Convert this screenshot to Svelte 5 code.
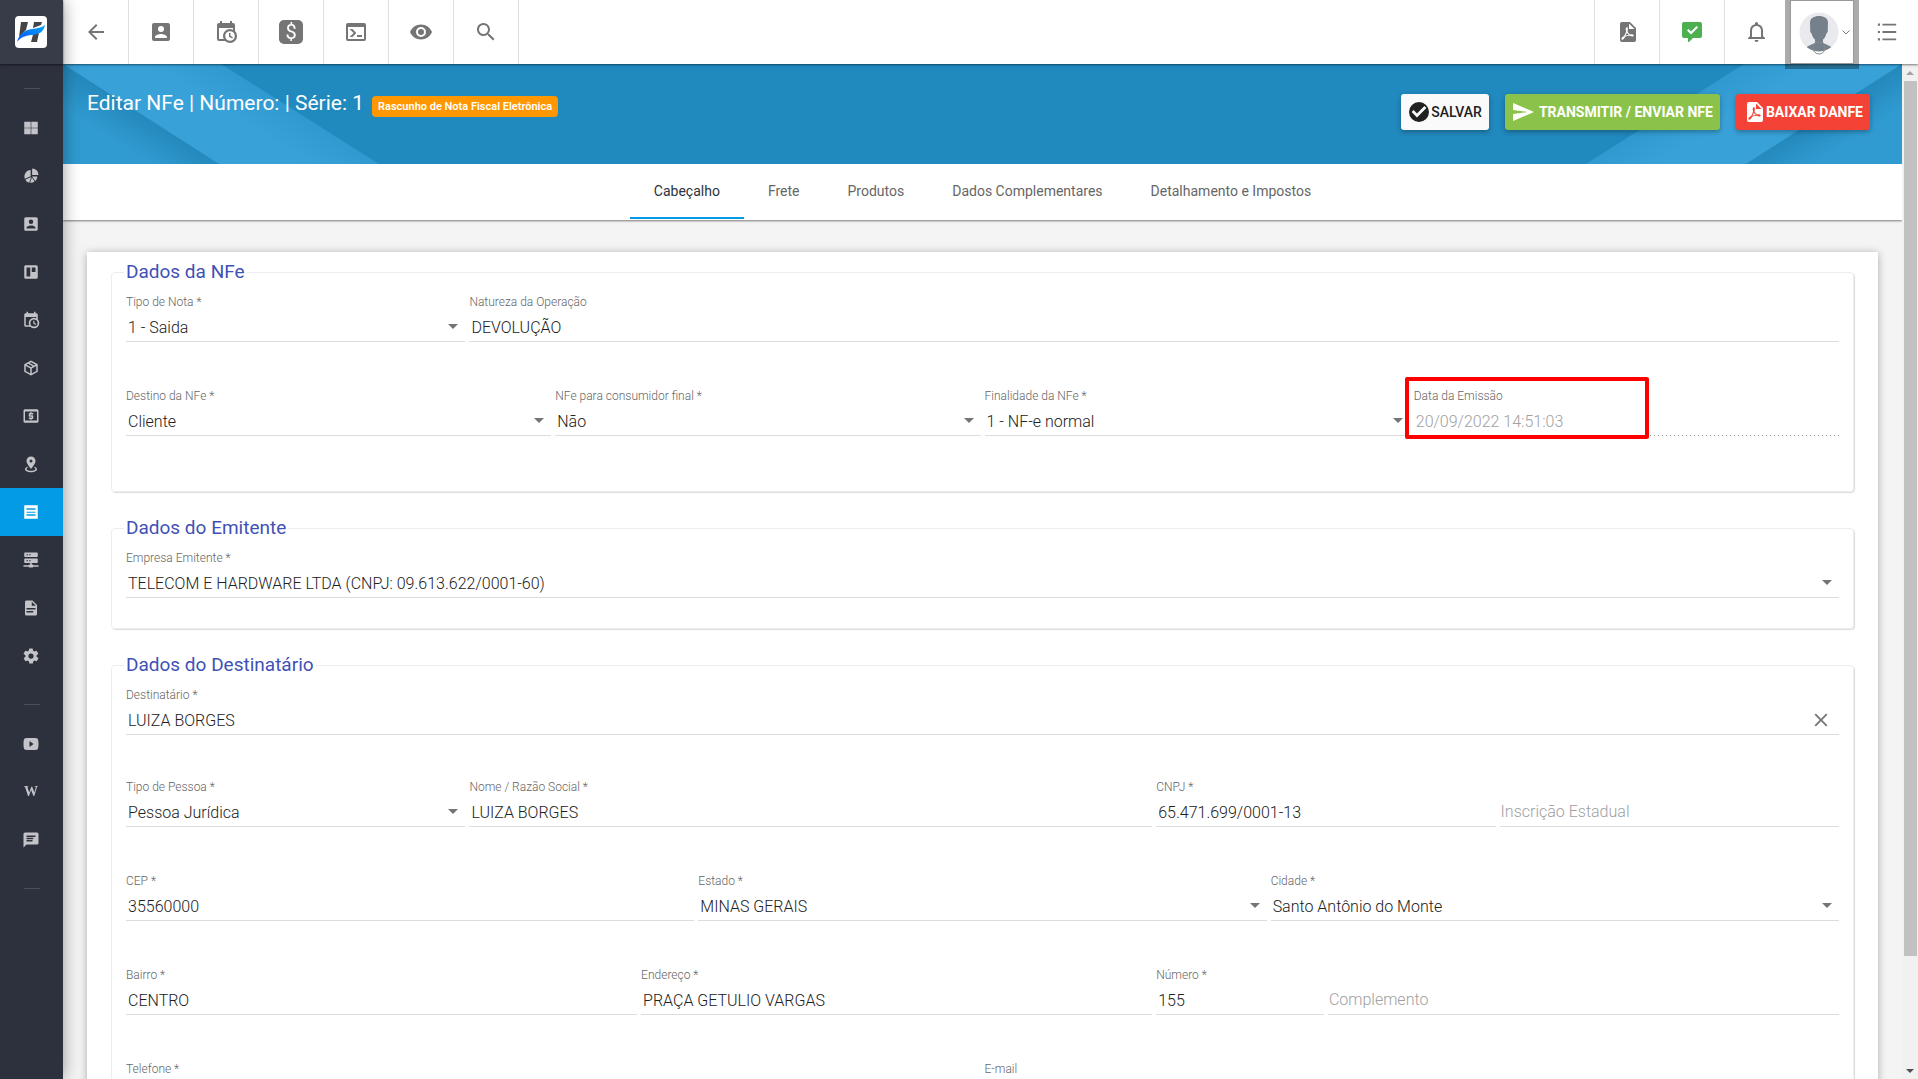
<script>
	const icons = {
		back: 'M20 11H7.8l5.6-5.6L12 4l-8 8 8 8 1.4-1.4L7.8 13H20z',
		accountBox: 'M6 17c0-2 4-3.1 6-3.1s6 1.1 6 3.1v1H6M15 9a3 3 0 1 1-6 0 3 3 0 0 1 6 0M3 5v14a2 2 0 0 0 2 2h14a2 2 0 0 0 2-2V5a2 2 0 0 0-2-2H5a2 2 0 0 0-2 2z',
		calendarClock: 'M15 13h1.5v2.8l2.4 1.4-.7 1.3-3.2-1.8V13M19 8H5v11h4.7A7 7 0 0 1 19 9.7V8M5 21a2 2 0 0 1-2-2V5c0-1.1.9-2 2-2h1V1h2v2h8V1h2v2h1a2 2 0 0 1 2 2v6.1A7 7 0 1 1 11.1 21H5m11-9.8a4.8 4.8 0 1 0 0 9.6 4.8 4.8 0 0 0 0-9.6z',
		console: 'M20 19V7H4v12h16m0-16a2 2 0 0 1 2 2v14a2 2 0 0 1-2 2H4a2 2 0 0 1-2-2V5c0-1.1.9-2 2-2h16m-7 14v-2h5v2h-5m-3.4-4-4-4h2.8l3.3 3.3c.4.4.4 1 0 1.4L8.4 17H5.6z',
		eye: 'M12 9a3 3 0 1 0 0 6 3 3 0 0 0 0-6m0 8a5 5 0 1 1 0-10 5 5 0 0 1 0 10m0-12.5C7 4.5 2.7 7.6 1 12c1.7 4.4 6 7.5 11 7.5s9.3-3.1 11-7.5c-1.7-4.4-6-7.5-11-7.5z',
		search: 'M15.5 14h-.8l-.3-.3A6.5 6.5 0 1 0 13.7 14.4l.3.3v.8l5 5 1.5-1.5-5-5zm-6 0a4.500 4.500 0 1 1 0-9 4.500 4.500 0 0 1 0 9z',
		pdf: 'M14 9h5.500L14 3.500V9M7 2h8l6 6v12a2 2 0 0 1-2 2H7a2 2 0 0 1-2-2V4a2 2 0 0 1 2-2M11.930 12.440C12.340 13.340 12.860 14.080 13.460 14.590L13.870 14.910C13 15.070 11.800 15.350 10.530 15.840L10.420 15.880L10.920 14.840C11.370 13.970 11.700 13.180 11.930 12.440M18.410 16.250C18.590 16.070 18.680 15.840 18.690 15.590C18.720 15.390 18.670 15.200 18.570 15.040C18.280 14.570 17.530 14.350 16.290 14.350L15 14.420L14.130 13.840C13.500 13.320 12.930 12.410 12.530 11.280L12.570 11.140C12.900 9.810 13.210 8.200 12.550 7.540C12.390 7.380 12.170 7.300 11.940 7.300H11.700C11.330 7.300 11 7.690 10.910 8.070C10.540 9.400 10.760 10.130 11.130 11.340C10.880 12.230 10.560 13.250 10.050 14.280L9.090 16.080L8.200 16.570C7 17.320 6.430 18.160 6.320 18.690C6.280 18.880 6.300 19.050 6.370 19.230L6.400 19.280L6.880 19.590L7.320 19.700C8.130 19.700 9.050 18.750 10.290 16.630L10.470 16.560C11.500 16.230 12.780 16 14.500 15.810C15.530 16.320 16.740 16.550 17.500 16.550C17.940 16.550 18.240 16.440 18.410 16.250Z',
		messageCheck: 'M4 2h16a2 2 0 0 1 2 2v12a2 2 0 0 1-2 2h-7l-4 4H8v-4H4a2 2 0 0 1-2-2V4c0-1.100.9-2 2-2M16.600 6 11 11.600 8.400 9 7 10.400l4 4 7-7z',
		bell: 'M16 17H7v-6.500a4.500 4.500 0 0 1 9 0M18 16v-5.500a6.500 6.500 0 0 0-5-6.300v-.7a1.500 1.500 0 0 0-3 0v.7a6.500 6.500 0 0 0-5 6.300V16l-2 2v1h17v-1M11.500 22a2 2 0 0 0 2-2h-4a2 2 0 0 0 2 2z',
		list: 'M7 3h15v2H7V3m0 8h15v2H7v-2m0 8h15v2H7v-2M2 2.800h2.400v2.400H2V2.800m0 8h2.400v2.400H2v-2.400m0 8h2.400v2.400H2v-2.400z',
		checkCircle: 'M12 2a10 10 0 1 0 0 20 10 10 0 0 0 0-20M10 17.400 4.600 12 6.600 10 10 13.400 17.400 6l2 2z',
		send: 'M2 21 23 12 2 3v7l15 2-15 2z',
		close: 'M19 6.400 17.600 5 12 10.600 6.400 5 5 6.400l5.600 5.600L5 17.600 6.400 19l5.600-5.600 5.600 5.600 1.400-1.400-5.600-5.600z',
		grid: 'M3 3.500h8.600v8H3v-8m9.400 0H21v8h-8.600v-8M3 12.300h8.600v8H3v-8m9.400 0H21v8h-8.600v-8z',
		pie: 'M13.500 2A8.500 8.500 0 0 1 22 10.500h-8.500V2M11.500 4v8.200l-7.600 3.600A8.500 8.500 0 0 1 11.500 4M12.300 13.200l-2.700 7.700a8.500 8.500 0 0 1-5.200-4zM13.400 12.500h7a8.500 8.500 0 0 1-2.700 6.200zM13.200 14l3.500 5.400a8.500 8.500 0 0 1-6 1.600z',
		board: 'M5 3h14a2 2 0 0 1 2 2v14a2 2 0 0 1-2 2H5a2 2 0 0 1-2-2V5c0-1.100.9-2 2-2m1 3v12h5V6H6m7 0v6h5V6h-5z',
		cube: 'M21 16.500c0 .4-.2.700-.5.900l-7.900 4.400a1 1 0 0 1-1.200 0l-7.900-4.400a1 1 0 0 1-.5-.9v-9c0-.4.200-.7.500-.9l7.900-4.400a1 1 0 0 1 1.200 0l7.900 4.400c.3.200.5.500.5.900v9M12 4.200 10.100 5.200 16 8.600l2-1.100-6-3.300M6 7.500l6 3.400 2-1.200-5.900-3.400L6 7.500M5 15.900l6 3.400v-6.700L5 9.200v6.700m14 0V9.200l-6 3.400v6.700l6-3.400z',
		cash: 'M4 3h16a2 2 0 0 1 2 2v14a2 2 0 0 1-2 2H4a2 2 0 0 1-2-2V5c0-1.100.9-2 2-2m0 3v12h16V6H4m7 11h2v-1h1a1 1 0 0 0 1-1v-3a1 1 0 0 0-1-1h-3v-1h4V8h-2V7h-2v1h-1a1 1 0 0 0-1 1v3a1 1 0 0 0 1 1h3v1H9v2h2v1z',
		pin: 'M12 2a6 6 0 0 1 6 6c0 4-6 10.500-6 10.500S6 12 6 8a6 6 0 0 1 6-6m0 4a2 2 0 1 0 0 4 2 2 0 0 0 0-4m8 13c0 2.200-3.600 4-8 4s-8-1.800-8-4c0-1.300 1.200-2.400 3.100-3.200l.7.900C6.700 17.300 6 17.900 6 18.600 6 20 8.700 21 12 21s6-1 6-2.400c0-.7-.7-1.300-1.800-1.900l.7-.9C18.800 16.600 20 17.700 20 19z',
		note: 'M3 3h18v18H3V3m3 4v2h12V7H6m0 4.500v1.500h12v-1.500H6M6 15v2h12v-2H6z',
		server: 'M4 2h16a1 1 0 0 1 1 1v4a1 1 0 0 1-1 1H4a1 1 0 0 1-1-1V3a1 1 0 0 1 1-1m0 8h16a1 1 0 0 1 1 1v4a1 1 0 0 1-1 1h-7v2h1a1 1 0 0 1 1 1h7v2h-7a1 1 0 0 1-1 1h-4a1 1 0 0 1-1-1H2v-2h7a1 1 0 0 1 1-1h1v-2H4a1 1 0 0 1-1-1v-4a1 1 0 0 1 1-1m2-5.800v1.600h2V4.200H6m3.500 0v1.600h2V4.200h-2M6 12.200v1.600h2v-1.600H6m3.500 0v1.600h2v-1.600h-2z',
		file: 'M13 9h5.500L13 3.500V9M6 2h8l6 6v12a2 2 0 0 1-2 2H6a2 2 0 0 1-2-2V4c0-1.100.9-2 2-2m9 16v-2H6v2h9m3-4v-2H6v2h12z',
		cog: 'M12 15.500a3.500 3.500 0 1 1 0-7 3.500 3.500 0 0 1 0 7m7.400-2.500a7 7 0 0 0 0-2l2.100-1.600c.2-.2.200-.4.100-.7l-2-3.400c-.1-.2-.4-.3-.6-.2l-2.500 1a7 7 0 0 0-1.700-1l-.4-2.600a.5.5 0 0 0-.5-.5h-4a.5.5 0 0 0-.5.5l-.4 2.600a7 7 0 0 0-1.700 1l-2.500-1c-.2-.1-.5 0-.6.2l-2 3.400c-.1.300-.1.500.1.700L4.600 11a7 7 0 0 0 0 2l-2.100 1.600c-.2.200-.2.400-.1.700l2 3.400c.1.200.4.300.6.200l2.500-1a7 7 0 0 0 1.700 1l.4 2.600c0 .3.200.5.500.5h4c.3 0 .5-.2.500-.5l.4-2.600a7 7 0 0 0 1.700-1l2.500 1c.2.100.5 0 .6-.2l2-3.400c.1-.3.100-.5-.1-.7z',
		play: 'M10 16V8l5.500 4M20 4.400C19.500 4.200 15.700 4 12 4s-7.500.2-8 .4C2.400 4.900 2 8.400 2 12s.4 7.100 2 7.600c.5.200 4.300.4 8 .4s7.500-.2 8-.4c1.600-.5 2-4 2-7.600s-.4-7.100-2-7.600z',
		chat: 'M20 2H4a2 2 0 0 0-2 2v18l4-4h14a2 2 0 0 0 2-2V4a2 2 0 0 0-2-2M6 9h9v2H6V9m8 5H6v-2h8v2m4-6H6V6h12v2z'
	};

	const nav = [
		[
			{ icon: 'grid', title: 'Dashboard' },
			{ icon: 'pie', title: 'Relatórios' },
			{ icon: 'accountBox', title: 'Pessoas' },
			{ icon: 'board', title: 'Quadros' },
			{ icon: 'calendarClock', title: 'Agenda' },
			{ icon: 'cube', title: 'Produtos' },
			{ icon: 'cash', title: 'Financeiro' },
			{ icon: 'pin', title: 'Mapa' },
			{ icon: 'note', title: 'Notas fiscais', active: true },
			{ icon: 'server', title: 'Servidores' },
			{ icon: 'file', title: 'Documentos' },
			{ icon: 'cog', title: 'Configurações' }
		],
		[
			{ icon: 'play', title: 'Vídeos' },
			{ icon: 'wiki', title: 'Wiki' },
			{ icon: 'chat', title: 'Suporte' }
		]
	];

	const tools = [
		{ icon: 'back', title: 'Voltar' },
		{ icon: 'accountBox', title: 'Clientes' },
		{ icon: 'calendarClock', title: 'Agenda' },
		{ icon: 'money', title: 'Financeiro' },
		{ icon: 'console', title: 'Terminal' },
		{ icon: 'eye', title: 'Visualizar' },
		{ icon: 'search', title: 'Buscar' }
	];

	const tabs = ['Cabeçalho', 'Frete', 'Produtos', 'Dados Complementares', 'Detalhamento e Impostos'];
	let activeTab = $state('Cabeçalho');

	// w is the share of the row, in percent
	const sections = [
		{
			title: 'Dados da NFe',
			tall: true,
			rows: [
				[
					{ id: 'tipoNota', label: 'Tipo de Nota *', value: '1 - Saida', w: 20, select: true },
					{ id: 'natureza', label: 'Natureza da Operação', value: 'DEVOLUÇÃO', w: 80 }
				],
				[
					{ id: 'destino', label: 'Destino da NFe *', value: 'Cliente', w: 25, select: true },
					{ id: 'consumidor', label: 'NFe para consumidor final *', value: 'Não', w: 25, select: true },
					{ id: 'finalidade', label: 'Finalidade da NFe *', value: '1 - NF-e normal', w: 25, select: true },
					{ id: 'emissao', label: 'Data da Emissão', value: '20/09/2022 14:51:03', w: 25, disabled: true, marked: true }
				]
			]
		},
		{
			title: 'Dados do Emitente',
			rows: [
				[{ id: 'empresa', label: 'Empresa Emitente *', value: 'TELECOM E HARDWARE LTDA (CNPJ: 09.613.622/0001-60)', w: 100, select: true }]
			]
		},
		{
			title: 'Dados do Destinatário',
			rows: [
				[{ id: 'destinatario', label: 'Destinatário *', value: 'LUIZA BORGES', w: 100, clear: true }],
				[
					{ id: 'tipoPessoa', label: 'Tipo de Pessoa *', value: 'Pessoa Jurídica', w: 20, select: true },
					{ id: 'nome', label: 'Nome / Razão Social *', value: 'LUIZA BORGES', w: 40 },
					{ id: 'cnpj', label: 'CNPJ *', value: '65.471.699/0001-13', w: 20 },
					{ id: 'ie', label: 'Inscrição Estadual', w: 20 }
				],
				[
					{ id: 'cep', label: 'CEP *', value: '35560000', w: 33.333 },
					{ id: 'estado', label: 'Estado *', value: 'MINAS GERAIS', w: 33.333, select: true },
					{ id: 'cidade', label: 'Cidade *', value: 'Santo Antônio do Monte', w: 33.333, select: true }
				],
				[
					{ id: 'bairro', label: 'Bairro *', value: 'CENTRO', w: 30 },
					{ id: 'endereco', label: 'Endereço *', value: 'PRAÇA GETULIO VARGAS', w: 30 },
					{ id: 'numero', label: 'Número *', value: '155', w: 10 },
					{ id: 'complemento', label: 'Complemento', w: 30 }
				],
				[
					{ id: 'telefone', label: 'Telefone *', value: '', w: 50 },
					{ id: 'email', label: 'E-mail', value: '', w: 50 }
				]
			]
		}
	];

	let scroller = $state(null);
	let viewHeight = $state(0);
	let thumbSize = $state(100);
	let thumbTop = $state(0);

	function updateThumb() {
		if (!scroller) return;
		thumbSize = (scroller.clientHeight / scroller.scrollHeight) * 100;
		thumbTop = (scroller.scrollTop / scroller.scrollHeight) * 100;
	}

	$effect(() => {
		if (viewHeight) updateThumb();
	});
</script>

{#snippet glyph(name, size = 24)}
	{#if name === 'money'}
		<span class="money" aria-hidden="true">$</span>
	{:else if name === 'wiki'}
		<span class="wiki" aria-hidden="true">W</span>
	{:else}
		<svg width={size} height={size} viewBox="0 0 24 24" fill="currentColor" fill-rule="evenodd" aria-hidden="true">
			<path d={icons[name]} />
		</svg>
	{/if}
{/snippet}

<div class="app">
	<aside class="sidebar">
		<a class="logo" href="#inicio" aria-label="Início">
			<svg width="32" height="32" viewBox="0 0 32 32" aria-hidden="true">
				<defs>
					<linearGradient id="swoosh" x1="0" y1="1" x2="1" y2="0">
						<stop offset="0" stop-color="#0050ff" />
						<stop offset="1" stop-color="#0aa5f0" />
					</linearGradient>
				</defs>
				<rect width="32" height="32" rx="4" fill="#fff" />
				<path d="M6 6h7l-2 8-7 7zM19 6h8l-1 3-8 3zM19 15l6-3-3 14h-6z" fill="#444" />
				<path d="M2 26C4 18 10 14 17 13c6-1 9-1 13-4-1 6-5 9-12 10-7 0-12 2-16 7z" fill="url(#swoosh)" />
			</svg>
		</a>
		<nav>
			{#each nav as group}
				<hr />
				{#each group as item}
					<a class="nav-item" class:active={item.active} href="#{item.icon}" aria-label={item.title}>
						{@render glyph(item.icon, 18)}
					</a>
				{/each}
			{/each}
			<hr />
		</nav>
	</aside>

	<div class="shell">
		<header class="toolbar">
			{#each tools as tool}
				<button class="tool" aria-label={tool.title}>{@render glyph(tool.icon)}</button>
			{/each}
			<span class="spacer"></span>
			<button class="tool right" aria-label="Arquivos PDF">{@render glyph('pdf')}</button>
			<button class="tool right green" aria-label="Mensagens">{@render glyph('messageCheck')}</button>
			<button class="tool right" aria-label="Notificações">{@render glyph('bell')}</button>
			<button class="user" aria-label="Conta">
				<svg class="avatar" width="40" height="40" viewBox="0 0 40 40" aria-hidden="true">
					<defs>
						<clipPath id="face"><circle cx="20" cy="20" r="19.500" /></clipPath>
					</defs>
					<circle cx="20" cy="20" r="19.500" fill="#e8eaee" />
					<path
						clip-path="url(#face)"
						fill="#76808a"
						d="M11 11c0-5 4-7 9-7s9 2 9 7c0 2-.3 4-.2 6 .4 2-.4 4-1.600 5-.6 3-2 4.500-3.200 5.500v3c2 2 6.500 2.500 9.500 5.500-3 3-8.500 4-13.500 4s-10.500-1-13.500-4c3-3 7.500-3.500 9.500-5.500v-3c-1.200-1-2.600-2.500-3.200-5.500-1.200-1-2-3-1.600-5 .1-2-.2-4-.2-6z"
					/>
					<circle cx="20" cy="36" r="6" fill="none" stroke="#85898c" />
				</svg>
				<svg width="8" height="8" viewBox="0 0 8 8" fill="none" stroke="#777" aria-hidden="true"><path d="M.5 2.500 4 6l3.500-3.500" /></svg>
			</button>
			<button class="menu" aria-label="Menu rápido">{@render glyph('list', 22)}</button>
		</header>

		<div class="body">
			<main bind:this={scroller} bind:clientHeight={viewHeight} onscroll={updateThumb}>
				<section class="hero">
					<svg class="stripes left" width="320" height="100" viewBox="0 0 320 100" aria-hidden="true">
						<defs>
							<linearGradient id="fold" gradientUnits="userSpaceOnUse" x1="80" y1="50" x2="60" y2="82">
								<stop offset="0" stop-color="#2488bb" />
								<stop offset="1" stop-color="#309bd1" />
							</linearGradient>
							<linearGradient id="band" gradientUnits="userSpaceOnUse" x1="237" y1="50" x2="217" y2="82">
								<stop offset="0" stop-color="#3099cf" />
								<stop offset="1" stop-color="#38a1d8" />
							</linearGradient>
						</defs>
						<path d="M0 0h158l158 100H0z" fill="url(#band)" />
						<path d="M0 0l156 100H0z" fill="url(#fold)" />
					</svg>
					<svg class="stripes right-side" width="320" height="100" viewBox="0 0 320 100" aria-hidden="true">
						<path d="M0 0h158l158 100H0z" fill="url(#band)" />
						<path d="M0 0l156 100H0z" fill="url(#fold)" />
					</svg>
					<h1>Editar NFe | Número: | Série: 1</h1>
					<span class="badge">Rascunho de Nota Fiscal Eletrônica</span>
					<div class="actions">
						<button class="btn save">{@render glyph('checkCircle')}SALVAR</button>
						<button class="btn send">{@render glyph('send')}TRANSMITIR / ENVIAR NFE</button>
						<button class="btn danfe">{@render glyph('pdf')}BAIXAR DANFE</button>
					</div>
				</section>

				<div class="tabs" role="tablist">
					{#each tabs as tab}
						<button
							class="tab"
							class:selected={tab === activeTab}
							role="tab"
							aria-selected={tab === activeTab}
							onclick={() => (activeTab = tab)}>{tab}</button>
					{/each}
				</div>

				<form class="card" onsubmit={(e) => e.preventDefault()}>
					{#each sections as section}
						<fieldset class:tall={section.tall}>
							<legend>{section.title}</legend>
							{#each section.rows as row}
								<div class="row" class:search={row[0].clear}>
									{#each row as field}
										<div class="field" class:marked={field.marked} style="width:{field.w}%">
											{#if field.value !== undefined}
												<label for={field.id}>{field.label}</label>
											{:else}
												<span class="label-space"></span>
											{/if}
											<div class="control" class:dotted={field.disabled}>
												{#if field.select}
													<select id={field.id}>
														<option>{field.value}</option>
													</select>
													<span class="caret"></span>
												{:else if field.value === undefined}
													<input id={field.id} class="empty" type="text" placeholder={field.label} aria-label={field.label} />
												{:else}
													<input id={field.id} type="text" value={field.value} disabled={field.disabled} />
												{/if}
												{#if field.clear}
													<button class="clear" type="button" aria-label="Limpar">{@render glyph('close', 22)}</button>
												{/if}
											</div>
										</div>
									{/each}
								</div>
							{/each}
						</fieldset>
					{/each}
				</form>
			</main>

			<div class="scrollbar" aria-hidden="true">
				<span class="arrow up"></span>
				<div class="track">
					<div style="height:{thumbTop}%"></div>
					<div class="thumb" style="height:{thumbSize}%"></div>
				</div>
				<span class="arrow down"></span>
			</div>
		</div>
	</div>
</div>

<style>
	:global(body) {
		margin: 0;
		font-family: Roboto, 'Noto Sans', sans-serif;
		background: #f4f4f4;
	}

	:global(*), :global(*::after) { box-sizing: border-box; }

	button, input, select { font-family: inherit; }
	button { border: 0; background: none; padding: 0; cursor: pointer; }
	svg { display: block; flex-shrink: 0; }

	.app { display: flex; height: 100vh; overflow: hidden; }

	/* Sidebar */
	.sidebar {
		width: 63px;
		flex-shrink: 0;
		background: #2d303d;
		box-shadow: 0 0 16px rgba(0, 0, 0, 0.4);
		position: relative;
		z-index: 3;
	}

	.logo {
		display: flex;
		align-items: center;
		justify-content: center;
		height: 64px;
		padding-right: 1px;
		background: #383c48;
		box-shadow: 0 1px 2px rgba(0, 0, 0, 0.5);
	}

	hr {
		width: 16px;
		height: 1px;
		border: 0;
		margin: 24px auto 15px;
		background: #4b4e59;
	}

	.nav-item {
		display: flex;
		align-items: center;
		justify-content: center;
		height: 48px;
		padding-right: 1px;
		color: #c3c4c8;
		text-decoration: none;
	}
	.nav-item.active { background: #039be5; color: #fff; }

	.wiki { font: bold 14px/16px 'Liberation Serif', serif; }

	.shell { flex: 1; min-width: 0; display: flex; flex-direction: column; }

	/* Top toolbar */
	.toolbar {
		display: flex;
		height: 64px;
		flex-shrink: 0;
		padding-left: 1px;
		background: #fff;
		box-shadow: 0 1px 2px rgba(0, 0, 0, 0.5);
		position: relative;
		z-index: 2;
		color: #757575;
	}

	.tool {
		display: flex;
		align-items: center;
		justify-content: center;
		width: 65px;
		color: inherit;
		border-right: 1px solid #e0e0e0;
	}
	.tool.right { border-right: 0; border-left: 1px solid #e0e0e0; }
	.tool.green { color: #4caf50; }

	.money {
		width: 24px;
		height: 24px;
		border-radius: 5px;
		background: #757575;
		color: #fff;
		font-size: 20px;
		line-height: 24px;
		text-align: center;
	}

	.spacer { flex: 1; }

	.user {
		display: flex;
		align-items: center;
		justify-content: center;
		gap: 3px;
		width: 64px;
		margin-left: 1px;
		padding-left: 4px;
		border: 1px solid #999;
		outline: 5px solid rgba(0, 0, 0, 0.33);
	}

	.avatar { overflow: visible; }

	.menu {
		display: flex;
		align-items: center;
		justify-content: center;
		width: 64px;
		padding-left: 2px;
		color: inherit;
	}

	.body { flex: 1; min-height: 0; display: flex; }

	main {
		flex: 1;
		min-width: 0;
		overflow-y: auto;
		scrollbar-width: none;
		background: #f4f4f4;
	}

	/* Page header */
	.hero {
		display: flex;
		align-items: flex-start;
		height: 100px;
		padding: 0 32px 0 24px;
		background: #2089be;
		color: #fff;
		position: relative;
	}

	.stripes { position: absolute; top: 0; left: 0; }
	.stripes.right-side { left: auto; right: 0; transform: scaleX(-1); }

	h1 {
		margin: 24px 8px 0 0;
		font-size: 21px;
		line-height: 30px;
		font-weight: 400;
		white-space: nowrap;
		position: relative;
	}

	.badge {
		margin-top: 32px;
		padding: 0 6px;
		border-radius: 4px;
		background: #ff9800;
		font-size: 11px;
		line-height: 21px;
		font-weight: 600;
		white-space: nowrap;
		position: relative;
	}

	.actions { display: flex; gap: 16px; margin: 30px 0 0 auto; position: relative; }

	.btn {
		display: flex;
		align-items: center;
		height: 36px;
		padding: 0 7px 0 6px;
		border-radius: 3px;
		font-size: 14px;
		font-weight: 700;
		white-space: nowrap;
		color: #fff;
		box-shadow: 0 2px 5px rgba(0, 0, 0, 0.3);
	}
	.btn.save { background: #fafafa; color: #212121; font-weight: 500; }
	.btn.send { background: #8bc34a; gap: 4px; }
	.btn.danfe { background: #f44336; }

	/* Tabs */
	.tabs {
		display: flex;
		justify-content: center;
		height: 56px;
		background: #fff;
		box-shadow: 0 1px 2px rgba(0, 0, 0, 0.5);
	}

	.tab {
		height: 55px;
		padding: 0 24px 2px;
		font-size: 14px;
		font-weight: 400;
		color: #666;
		border-top: 2px solid transparent;
		border-bottom: 2px solid transparent;
	}
	.tab.selected { color: #2d323e; border-bottom-color: #039be5; }

	/* Form */
	.card {
		margin: 32px 24px 24px;
		padding: 8px 24px 38px;
		background: #fff;
		box-shadow: 0 1px 8px rgba(0, 0, 0, 0.3);
	}

	fieldset {
		min-width: 0;
		margin: 0 0 24px;
		padding: 10px 10px 30px 14px;
		border: 1px solid #ededed;
		border-radius: 4px;
		box-shadow: 1px 1px 1px rgba(0, 0, 0, 0.14);
	}
	fieldset.tall { padding-bottom: 55px; }
	fieldset:last-child { margin-bottom: 0; }

	legend {
		margin-left: -2px;
		padding: 0 2px;
		font-size: 19px;
		line-height: 24px;
		color: #3f51b5;
	}

	.row { display: flex; }
	.row + .row { margin-top: 46px; }
	.row.search + .row { margin-top: 44px; }

	.field { padding-right: 4px; position: relative; }

	label, .label-space {
		display: block;
		height: 16px;
		font-size: 12px;
		line-height: 16px;
		font-weight: 300;
		color: #666;
		margin-bottom: 2px;
	}

	.control {
		display: grid;
		align-items: center;
		height: 30px;
		border-bottom: 1px solid #dcdcdc;
	}
	.control > * { grid-area: 1 / 1; }

	.control.dotted {
		border-bottom-color: transparent;
		background: linear-gradient(to right, #9e9e9e 0 25%, transparent 25%) bottom left / 4px 1px repeat-x border-box;
	}

	input, select {
		width: 100%;
		min-width: 0;
		height: 28px;
		margin: 0;
		padding: 2px 2px 0;
		border: 0;
		outline: 0;
		background: transparent;
		appearance: none;
		font-size: 16px;
		font-weight: 300;
		color: #212121;
	}
	input.empty { padding: 0 1px; }
	input::placeholder { color: #a0a0a0; opacity: 1; }
	input:disabled { color: #a0a0a0; }

	.caret {
		justify-self: end;
		margin-right: 7px;
		border: 5px solid transparent;
		border-top-color: #757575;
		border-bottom-width: 0;
		pointer-events: none;
	}

	.clear { justify-self: end; margin-right: 7px; color: #757575; }

	/* Highlight over the issue date */
	.marked::after {
		content: '';
		position: absolute;
		left: -9px;
		top: -11px;
		width: 244px;
		height: 62px;
		border: 4px solid #f00;
		border-radius: 2px;
		pointer-events: none;
	}

	/* Scrollbar */
	.scrollbar {
		width: 16px;
		flex-shrink: 0;
		display: flex;
		flex-direction: column;
		background: #f1f1f1;
	}
	.track { flex: 1; min-height: 0; overflow: hidden; }
	.thumb { margin: 0 1px 0 2px; background: #c1c1c1; }

	.arrow { height: 17px; display: flex; align-items: center; justify-content: center; flex-shrink: 0; }
	.arrow::before { content: ''; border: 4px solid transparent; }
	.arrow.up::before { border-top-width: 0; border-bottom-color: #a3a3a3; }
	.arrow.down::before { border-bottom-width: 0; border-top-color: #505050; }
</style>
